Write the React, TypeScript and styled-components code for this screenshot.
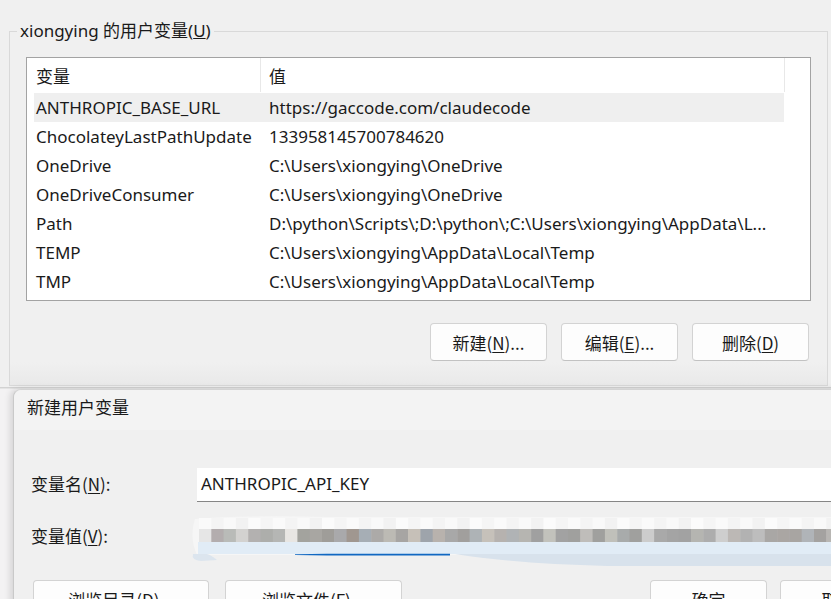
import React from 'react';
import styled, { createGlobalStyle } from 'styled-components';

const Global = createGlobalStyle`
  html, body { margin: 0; padding: 0; overflow: hidden; background: #f3f2f3; }
  body {
    font-family: "Noto Sans", "Noto Sans CJK SC", sans-serif;
    font-size: 17px;
    color: #000;
  }
  #root { width: 831px; height: 599px; overflow: hidden; }
`;

const Screen = styled.div`
  width: 831px;
  height: 599px;
  overflow: hidden;
  display: flex;
  flex-direction: column;
  background: #f3f2f3;
`;

const BackWindow = styled.div`
  flex: none;
  height: 388px;
  box-sizing: border-box;
  background: #f0f0f0;
  border-bottom: 1px solid #d2d2d2;
  padding: 20px 3px 0 9px;
  box-shadow: 0 1px 0 #e4e4e4;
`;

const GroupBox = styled.fieldset`
  margin: 0;
  padding: 0 16px 24px 16px;
  border: 1px solid #d9d9d9;
  border-radius: 0;
  min-width: 0;
  background: linear-gradient(to bottom, #f0f0f0 0, #f0f0f0 330px, #e9e9e9 100%);
`;

const Legend = styled.legend`
  margin-left: -9px;
  padding: 0 3px;
  font-size: 17px;
  line-height: 22px;
  color: #1a1a1a;
`;

const ListBox = styled.div`
  margin-top: 15px;
  height: 244px;
  box-sizing: border-box;
  border: 1px solid #a3a3a3;
  background: #fff;
  display: flex;
  flex-direction: column;
`;

const HeaderRow = styled.div`
  display: flex;
  height: 34px;
  padding-bottom: 1px;
  flex: none;
`;

const HeaderCell = styled.div<{ $w: number; $pad: number }>`
  width: ${(p) => p.$w}px;
  padding-left: ${(p) => p.$pad}px;
  box-sizing: border-box;
  border-right: 1px solid #e8e8e8;
  display: flex;
  align-items: center;
  font-size: 17px;
  color: #1a1a1a;
`;

const Rows = styled.div`
  padding-left: 7px;
  display: flex;
  flex-direction: column;
`;

const Row = styled.div<{ $selected?: boolean }>`
  width: 750px;
  height: 29px;
  box-sizing: border-box;
  padding-bottom: 1px;
  display: flex;
  align-items: center;
  background: ${(p) => (p.$selected ? '#efefef' : 'transparent')};
  font-size: 17px;
  color: #1a1a1a;
  white-space: nowrap;
`;

const NameCell = styled.div`
  width: 226px;
  padding-left: 2px;
  box-sizing: border-box;
  flex: none;
`;

const ValueCell = styled.div`
  padding-left: 9px;
  overflow: hidden;
`;

const ButtonBar = styled.div`
  display: flex;
  justify-content: flex-end;
  gap: 14px;
  padding-right: 2px;
  margin-top: 22px;
`;

const Button = styled.button<{ $w?: number }>`
  width: ${(p) => p.$w ?? 117}px;
  height: 38px;
  flex: none;
  box-sizing: border-box;
  border: 1px solid #d3d3d3;
  border-bottom-color: #c2c2c2;
  border-radius: 4px;
  background: #fdfdfd;
  font-family: "Noto Sans CJK SC", "Noto Sans", sans-serif;
  font-size: 17px;
  color: #1a1a1a;
  padding: 0;
  display: flex;
  align-items: center;
  justify-content: center;
  u { text-underline-offset: 2px; }
`;

const Dialog = styled.div`
  flex: none;
  width: 900px;
  height: 300px;
  margin: 1px 0 0 13px;
  background: #f0f0f0;
  border-left: 1px solid #c9c9c9;
  border-top: 1px solid #d4d4d4;
  border-top-left-radius: 8px;
  box-shadow: -3px 0 6px rgba(0, 0, 0, 0.12);
  display: flex;
  flex-direction: column;
`;

const TitleBar = styled.div`
  height: 40px;
  box-sizing: border-box;
  flex: none;
  background: #f3f3f3;
  border-top-left-radius: 8px;
  padding: 0 0 7px 13px;
  display: flex;
  align-items: center;
  font-family: "Noto Sans CJK SC", sans-serif;
  font-size: 17px;
  color: #1a1a1a;
`;

const Body = styled.div`
  padding: 38px 17px 0 17px;
  display: flex;
  flex-direction: column;
`;

const FormRow = styled.div<{ $mt?: number }>`
  display: flex;
  align-items: center;
  height: 34px;
  margin-top: ${(p) => p.$mt ?? 0}px;
`;

const Label = styled.div`
  width: 166px;
  flex: none;
  padding-bottom: 3px;
  font-family: "Noto Sans CJK SC", sans-serif;
  font-size: 17px;
  color: #1a1a1a;
  u { text-underline-offset: 2px; }
`;

const TextInput = styled.div`
  flex: 1;
  height: 34px;
  box-sizing: border-box;
  background: #fff;
  border-bottom: 1px solid #868686;
  padding: 0 0 3px 4px;
  display: flex;
  align-items: center;
  font-size: 17px;
  color: #1a1a1a;
`;

const BlurField = styled.div`
  flex: 1;
  height: 34px;
  position: relative;
`;

const BlurArt = styled.svg`
  position: absolute;
  left: -10px;
  top: -5px;
`;

const BottomBar = styled.div`
  display: flex;
  align-items: center;
  margin-top: 26px;
  padding-left: 2px;
`;

const Group = styled.div<{ $gap: number }>`
  display: flex;
  gap: ${(p) => p.$gap}px;
`;

const Spacer = styled.div`
  flex: 1;
`;

const vars: [string, string][] = [
  ['ANTHROPIC_BASE_URL', 'https://gaccode.com/claudecode'],
  ['ChocolateyLastPathUpdate', '133958145700784620'],
  ['OneDrive', 'C:\\Users\\xiongying\\OneDrive'],
  ['OneDriveConsumer', 'C:\\Users\\xiongying\\OneDrive'],
  ['Path', 'D:\\python\\Scripts\\;D:\\python\\;C:\\Users\\xiongying\\AppData\\L...'],
  ['TEMP', 'C:\\Users\\xiongying\\AppData\\Local\\Temp'],
  ['TMP', 'C:\\Users\\xiongying\\AppData\\Local\\Temp'],
];

const grays = [
  '#e6e6e6', '#b3adae', '#b9bbb8', '#d3d2d0', '#b3b1b0', '#adaeab', '#b5b6b4', '#e8e6e3',
  '#a3a39e', '#a8a6a2', '#9f9d99', '#a9a9ab', '#a09790', '#a6aeb5', '#acaaa8', '#bcbab4',
  '#a7a5a3', '#c6c0b8', '#9ea4ab', '#b8b2ad', '#a8a8a8', '#a19f9d', '#aeb3b6', '#c6c1ba',
  '#b6b2af', '#b0b3b5', '#b6b5b1', '#a0a0a0', '#c2c2bc', '#a2a2a2', '#a0a09e', '#bfbdba',
  '#a0a09e', '#c0c0ba', '#a8abab', '#a0a09e', '#cccccc', '#a9a9a9', '#a4a4a4', '#a2a2a2',
  '#b5b5b1', '#adadad', '#cecece', '#bcb8b5', '#b2b2b2', '#bdbdbd', '#a9a7a5', '#aaa6a3',
  '#a8a5a2', '#b0b4b8', '#a4a2a0', '#b8b6b3',
];

const tops = ['#fafafa', '#f4f4f4', '#f9f9f9', '#f2f2f2', '#fbfbfb', '#f5f5f5'];

function Mosaic() {
  const cell = 12.3;
  return (
    <BlurArt width={644} height={56} viewBox="0 0 644 56">
      <path d="M8 4 Q60 0 140 2 L644 2 L644 40 L10 40 Q2 22 8 4 Z" fill="#f6f6f6" />
      {grays.map((_, i) => (
        <rect key={'t' + i} x={12 + i * cell} y={3} width={cell + 0.5} height={11} fill={tops[i % tops.length]} />
      ))}
      {grays.map((c, i) => (
        <rect key={'g' + i} x={12 + i * cell} y={14} width={cell + 0.5} height={13} fill={c} />
      ))}
      <rect x={11} y={27} width={633} height={12} fill="#e1ecf6" />
      <path d="M6 39 Q4 45 14 46 L30 45 Q24 40 20 39 Z" fill="#dce5ee" />
      <path d="M268 39 L644 39 L644 51 L420 51 Q330 49 268 39 Z" fill="#d8e2ec" />
      <path d="M108 39.3 L140 38.8 L263 38.8 L263 40.6 L140 40.6 L108 40 Z" fill="#1168c2" />
    </BlurArt>
  );
}

export default function App() {
  return (
    <>
      <Global />
      <Screen>
        <BackWindow>
          <GroupBox>
            <Legend>
              xiongying 的用户变量(<u>U</u>)
            </Legend>
            <ListBox>
              <HeaderRow>
                <HeaderCell $w={234} $pad={9}>变量</HeaderCell>
                <HeaderCell $w={524} $pad={8}>值</HeaderCell>
              </HeaderRow>
              <Rows>
                {vars.map(([n, v], i) => (
                  <Row key={n} $selected={i === 0}>
                    <NameCell>{n}</NameCell>
                    <ValueCell>{v}</ValueCell>
                  </Row>
                ))}
              </Rows>
            </ListBox>
            <ButtonBar>
              <Button>新建(<u>N</u>)...</Button>
              <Button>编辑(<u>E</u>)...</Button>
              <Button>删除(<u>D</u>)</Button>
            </ButtonBar>
          </GroupBox>
        </BackWindow>
        <Dialog>
          <TitleBar>新建用户变量</TitleBar>
          <Body>
            <FormRow>
              <Label>变量名(<u>N</u>):</Label>
              <TextInput>ANTHROPIC_API_KEY</TextInput>
            </FormRow>
            <FormRow $mt={18}>
              <Label>变量值(<u>V</u>):</Label>
              <BlurField>
                <Mosaic />
              </BlurField>
            </FormRow>
            <BottomBar>
              <Group $gap={16}>
                <Button $w={176}>浏览目录(<u>D</u>)...</Button>
                <Button $w={177}>浏览文件(<u>F</u>)...</Button>
              </Group>
              <Spacer />
              <Group $gap={13}>
                <Button>确定</Button>
                <Button>取消</Button>
              </Group>
            </BottomBar>
          </Body>
        </Dialog>
      </Screen>
    </>
  );
}
